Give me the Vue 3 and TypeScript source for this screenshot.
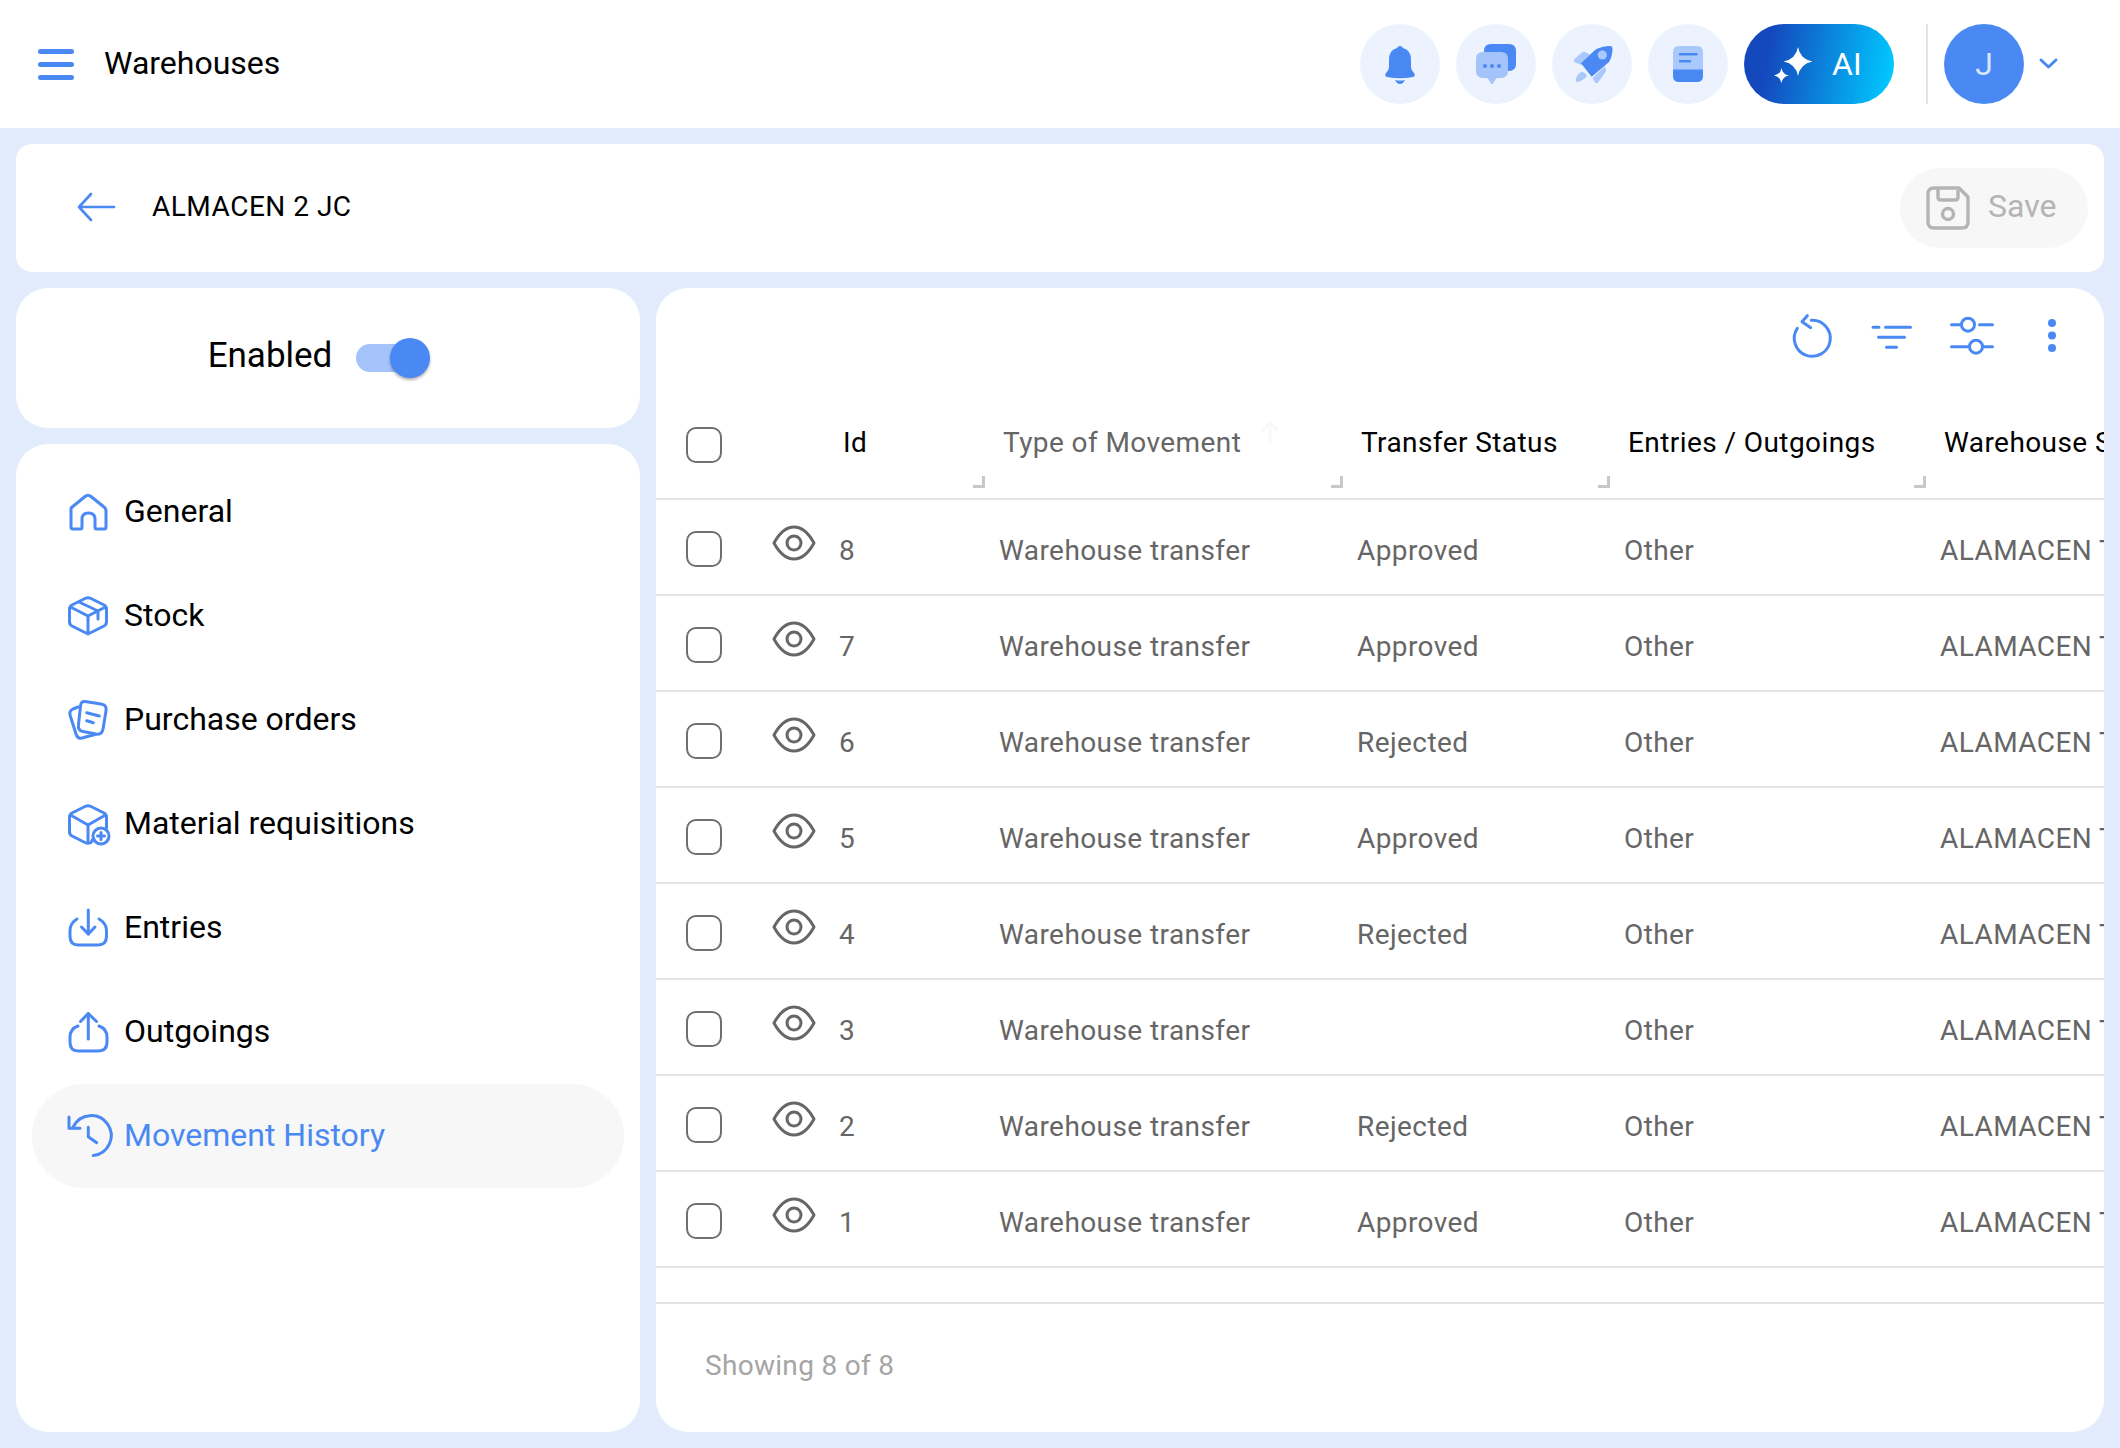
<script setup lang="ts">
interface MenuItem {
  label: string
  paths: string[]
  active?: boolean
}

interface Movement {
  id: number
  status: string
}

const menu: MenuItem[] = [
  {
    label: 'General',
    paths: ['M3 16 L17 4.5 Q20 2 23 4.5 L36 15 Q38 16.5 38 19 V35 Q38 37 36 37 H28.5 Q27 37 27 35 V27 Q27 21 20.5 21 Q14 21 14 27 V35 Q14 37 12.5 37 H5 Q3 37 3 35 V19 Q3 17 3 16 Z']
  },
  {
    label: 'Stock',
    paths: [
      'M17 2.5 Q20 1 23 2.5 L36 9 Q38.5 10.5 38.5 13 V26 Q38.5 28.5 36 30 L23 36.5 Q20 38 17 36.5 L4 30 Q1.5 28.5 1.5 26 V13 Q1.5 10.5 4 9 Z',
      'M2.5 11 L20 20 L37.5 11',
      'M20 20 V38',
      'M11 6 L30 15 V23'
    ]
  },
  {
    label: 'Purchase orders',
    paths: [
      'M17 1.5 L33 4 Q39 5 38 11 L35 29 Q34 35 28 34 L15 31.5 Q9.5 30.5 10.5 24.5 L12.5 6 Q13 1 17 1.5 Z',
      'M10 7 L5 9 Q1 11 2 15 L8 34 Q9.5 39 14 38 L27 34.5',
      'M18.7 12.7 L31.3 16',
      'M18.7 20.7 L25.3 22.7'
    ]
  },
  {
    label: 'Material requisitions',
    paths: [
      'M25 35 L23 38.5 Q20 40 17 38.5 L4 32 Q1.5 30.5 1.5 28 V13 Q1.5 10.5 4 9 L17 2.5 Q20 1 23 2.5 L36 9 Q38.5 10.5 38.5 13 V24',
      'M2.5 11 L20 21 L37.5 11',
      'M20 21 V38',
      'M41 32 A8 8 0 1 1 25 32 A8 8 0 1 1 41 32 Z',
      'M29.5 32 H36.5',
      'M33 28.5 V35.5'
    ]
  },
  {
    label: 'Entries',
    paths: [
      'M9 11 Q2 15 2 23 V28 Q2 37 10 37 H30 Q38.5 37 38.5 28 V23 Q38.5 15 31 11',
      'M20.3 2 V26',
      'M13.5 19 L20.3 26 L27 19'
    ]
  },
  {
    label: 'Outgoings',
    paths: [
      'M10 14 Q2 17 2 25 V30 Q2 39 10 39 H30 Q39 39 39 30 V25 Q39 17 31 14',
      'M20.3 1.5 V27',
      'M12.5 9.5 L20.3 1.5 L28.5 9.5'
    ]
  },
  {
    label: 'Movement History',
    active: true,
    paths: [
      'M5.3 10.7 A20 20 0 1 1 25.3 39.5',
      'M1 1 V12.3 H12',
      'M20.3 11.3 V20.7 L28.7 26.7'
    ]
  }
]

const movements: Movement[] = [
  { id: 8, status: 'Approved' },
  { id: 7, status: 'Approved' },
  { id: 6, status: 'Rejected' },
  { id: 5, status: 'Approved' },
  { id: 4, status: 'Rejected' },
  { id: 3, status: '' },
  { id: 2, status: 'Rejected' },
  { id: 1, status: 'Approved' }
]
</script>

<template>
  <div class="page">
    <header class="topbar">
      <button class="burger" aria-label="Menu">
        <span></span><span></span><span></span>
      </button>
      <h1 class="page-title">Warehouses</h1>

      <div class="top-actions">
        <button class="round-btn" aria-label="Notifications">
          <svg viewBox="0 0 48 48" width="48" height="48">
            <path fill="#4a89f3" d="M24 6 Q26 6 27 8 Q35 10 35 20 V27 Q35 30 38 33 Q40 36 37 37 Q24 39.5 11 37 Q8 36 10 33 Q13 30 13 27 V20 Q13 10 21 8 Q22 6 24 6 Z" />
            <path fill="#4a89f3" d="M19 40 Q24 41 29 40 Q27 44 24 44 Q21 44 19 40 Z" />
          </svg>
        </button>
        <button class="round-btn" aria-label="Messages">
          <svg viewBox="0 0 48 48" width="48" height="48">
            <path fill="#4a89f3" d="M19 4 H37 Q44 4 44 11 V24 Q44 31 37 31 H20 Q12 31 12 24 V11 Q12 4 19 4 Z" />
            <path fill="#a3c3fa" d="M11 12 H29 Q36 12 36 19 V31 Q36 38 29 38 H24.5 L21 43.5 Q20 44.5 19 43.5 L15.5 38 H11 Q4 38 4 31 V19 Q4 12 11 12 Z" />
            <circle cx="13" cy="26" r="2" fill="#4a89f3" />
            <circle cx="20" cy="26" r="2" fill="#4a89f3" />
            <circle cx="27" cy="26" r="2" fill="#4a89f3" />
          </svg>
        </button>
        <button class="round-btn" aria-label="Launch">
          <svg viewBox="0 0 48 48" width="48" height="48">
            <path fill="#a9c8fb" d="M6.5 19 L14 12.5 Q15.5 11.5 17 12 L22 14.5 L14 25 L7 22.5 Q5 21 6.5 19 Z" />
            <path fill="#a9c8fb" d="M37 26 L38 30 Q38.3 31.5 37 33 L30 42.5 Q28.5 44 27 42.5 L24.5 38 Z" />
            <path fill="#a9c8fb" d="M13.7 31.7 Q19 33 18.7 37 Q14 41 10 42 Q7 42.5 8 39 Q9 34 13.7 31.7 Z" />
            <path fill="#4a89f3" d="M13 23.3 L27 10 Q34 6 42 6 Q44.5 6 44.5 8.5 Q44.5 16 41 22 L23.7 36.7 Z" />
            <circle cx="34.3" cy="15" r="4.6" fill="#a9c8fb" />
          </svg>
        </button>
        <button class="round-btn" aria-label="Documentation">
          <svg viewBox="0 0 48 48" width="48" height="48">
            <path fill="#a9c8fb" d="M15 6 H33 Q39 6 39 12 V30 H9 V12 Q9 6 15 6 Z" />
            <path fill="#4a89f3" d="M9 29.5 H39 V36 Q39 42 33 42 H15 Q9 42 9 36 Z" />
            <path d="M16 14.3 H32.5 M16 21.3 H26" stroke="#4a89f3" stroke-width="2.4" stroke-linecap="round" />
          </svg>
        </button>
        <button class="ai-btn">
          <svg viewBox="0 0 44 44" width="44" height="44">
            <path fill="#fff" d="M27 5 Q29 17 41.5 19.5 Q29 22 27 34 Q25 22 12.5 19.5 Q25 17 27 5 Z" />
            <path fill="#fff" d="M10.5 26 Q11.5 32.5 18 33.5 Q11.5 34.5 10.5 41 Q9.5 34.5 3 33.5 Q9.5 32.5 10.5 26 Z" />
          </svg>
          <span>AI</span>
        </button>
      </div>

      <div class="top-divider"></div>
      <div class="avatar">J</div>
      <svg class="chevron" viewBox="0 0 24 24" width="24" height="24" fill="none" stroke="#4a89f3" stroke-width="3" stroke-linecap="round" stroke-linejoin="round">
        <path d="M5 8 L12.5 15 L20 8" />
      </svg>
    </header>

    <main class="content">
      <section class="title-card">
        <button class="back-btn" aria-label="Back">
          <svg viewBox="0 0 40 32" width="40" height="32" fill="none" stroke="#4a89f3" stroke-width="2.6" stroke-linecap="round" stroke-linejoin="round">
            <path d="M2 16 H37 M14 3 L2 16 L14 29" />
          </svg>
        </button>
        <span class="record-name">ALMACEN 2 JC</span>
        <button class="save-btn" disabled>
          <svg viewBox="0 0 48 48" width="48" height="48" fill="none" stroke="#b4b4b4" stroke-width="3.4" stroke-linejoin="round">
            <path d="M10 4 H35 L44 13 V38 Q44 44 38 44 H10 Q4 44 4 38 V10 Q4 4 10 4 Z" />
            <path d="M14 4 V13 Q14 16 17 16 H31 Q34 16 34 13 V6" />
            <circle cx="24" cy="30" r="5.5" />
          </svg>
          <span class="save-label">Save</span>
        </button>
      </section>

      <div class="columns">
        <aside class="side">
          <div class="enabled-card">
            <span class="enabled-label">Enabled</span>
            <span class="switch"><span class="thumb"></span></span>
          </div>
          <nav class="menu-card">
            <a v-for="item in menu" :key="item.label" class="menu-item" :class="{ active: item.active }">
              <svg viewBox="0 0 40 40" width="40" height="40" fill="none" stroke="#4a89f3" stroke-width="3" stroke-linecap="round" stroke-linejoin="round">
                <path v-for="d in item.paths" :key="d" :d="d" />
              </svg>
              <span class="menu-label">{{ item.label }}</span>
            </a>
          </nav>
        </aside>

        <section class="panel">
          <div class="toolbar">
            <button class="tool" aria-label="Refresh">
              <svg viewBox="0 0 48 48" width="48" height="48" fill="none" stroke="#4a89f3" stroke-width="3" stroke-linecap="round" stroke-linejoin="round">
                <path d="M9.3 16.3 A18 18 0 1 0 23.3 8.3" />
                <path d="M19.3 3.7 L14 9.7 L22.7 15.7" />
              </svg>
            </button>
            <button class="tool" aria-label="Filter">
              <svg viewBox="0 0 48 48" width="48" height="48" fill="none" stroke="#4a89f3" stroke-width="3" stroke-linecap="round">
                <path d="M5 15.3 H11 M17.5 15.3 H42.5 M10.5 25.3 H36.5 M18.5 35.3 H28.5" />
              </svg>
            </button>
            <button class="tool" aria-label="Columns">
              <svg viewBox="0 0 48 48" width="48" height="48" fill="none" stroke="#4a89f3" stroke-width="3" stroke-linecap="round">
                <circle cx="20" cy="12.7" r="6.5" />
                <circle cx="28" cy="34.7" r="6.5" />
                <path d="M3.5 12.7 H12.5 M31.5 12.7 H44.5 M3.5 34.7 H20.5 M35.5 34.7 H44.5" />
              </svg>
            </button>
            <button class="tool" aria-label="More">
              <svg viewBox="0 0 48 48" width="48" height="48" fill="#4a89f3">
                <circle cx="24" cy="11" r="4" />
                <circle cx="24" cy="23.5" r="4" />
                <circle cx="24" cy="36" r="4" />
              </svg>
            </button>
          </div>

          <div class="table-wrap">
            <table class="grid">
              <colgroup>
                <col style="width: 116px" />
                <col style="width: 67px" />
                <col style="width: 160px" />
                <col style="width: 358px" />
                <col style="width: 267px" />
                <col style="width: 316px" />
                <col style="width: 300px" />
              </colgroup>
              <thead>
                <tr>
                  <th class="check-cell"><span class="checkbox"></span></th>
                  <th></th>
                  <th>Id<i class="resizer"></i></th>
                  <th class="sorted">
                    Type of Movement
                    <svg class="sort-arrow" viewBox="0 0 24 24" width="24" height="24" fill="none" stroke="#f8f8f8" stroke-width="3">
                      <path d="M12 22 V3 M4 11 L12 3 L20 11" />
                    </svg>
                    <i class="resizer"></i>
                  </th>
                  <th>Transfer Status<i class="resizer"></i></th>
                  <th>Entries / Outgoings<i class="resizer"></i></th>
                  <th>Warehouse Source</th>
                </tr>
              </thead>
              <tbody>
                <tr v-for="row in movements" :key="row.id">
                  <td class="check-cell"><span class="checkbox"></span></td>
                  <td>
                    <svg class="eye" viewBox="0 0 44 36" width="44" height="36" fill="none" stroke="#666" stroke-width="3" stroke-linejoin="round">
                      <path d="M2 18 C8 7 15 2 22 2 C29 2 36 7 42 18 C36 29 29 34 22 34 C15 34 8 29 2 18 Z" />
                      <circle cx="22" cy="18" r="7" />
                    </svg>
                  </td>
                  <td>{{ row.id }}</td>
                  <td>Warehouse transfer</td>
                  <td>{{ row.status }}</td>
                  <td>Other</td>
                  <td>ALAMACEN TRANSITO</td>
                </tr>
              </tbody>
            </table>
          </div>

          <footer class="panel-footer">Showing 8 of 8</footer>
        </section>
      </div>
    </main>
  </div>
</template>

<style>
html,
body {
  margin: 0;
  background: #e2ebfc;
}
</style>

<style scoped>
.page {
  width: 2120px;
  height: 1448px;
  display: flex;
  flex-direction: column;
  overflow: hidden;
  background: #e2ebfc;
  font-family: Roboto, "Liberation Sans", sans-serif;
  color: #000;
}

button {
  border: none;
  background: none;
  padding: 0;
  font-family: inherit;
  cursor: pointer;
}

.topbar {
  flex: 0 0 128px;
  display: flex;
  align-items: center;
  padding: 0 60px 0 38px;
  background: #fff;
}

.burger {
  width: 36px;
  display: flex;
  flex-direction: column;
  gap: 8px;
}

.burger span {
  height: 5px;
  border-radius: 3px;
  background: #4a89f3;
}

.page-title {
  margin: 0 0 2px 30px;
  font-size: 32px;
  font-weight: 400;
}

.top-actions {
  margin-left: auto;
  display: flex;
  gap: 16px;
}

.round-btn {
  width: 80px;
  height: 80px;
  border-radius: 50%;
  background: #ecf3fe;
  display: flex;
  align-items: center;
  justify-content: center;
}

.ai-btn {
  width: 150px;
  height: 80px;
  border-radius: 40px;
  padding-left: 27px;
  display: flex;
  align-items: center;
  gap: 17px;
  background: linear-gradient(100deg, #1449bd 18%, #00c8ff 96%);
  color: #fff;
  font-size: 32px;
}

.top-divider {
  width: 2px;
  height: 80px;
  margin-left: 32px;
  background: #e4e4e4;
}

.avatar {
  width: 80px;
  height: 80px;
  margin-left: 16px;
  border-radius: 50%;
  background: #4a89f3;
  color: #d6e4fc;
  font-size: 32px;
  display: flex;
  align-items: center;
  justify-content: center;
}

.chevron {
  margin-left: 12px;
}

.content {
  flex: 1;
  min-height: 0;
  display: flex;
  flex-direction: column;
  gap: 16px;
  padding: 16px;
}

.title-card {
  flex: 0 0 128px;
  display: flex;
  align-items: center;
  padding: 0 16px 0 61px;
  background: #fff;
  border-radius: 16px;
}

.back-btn {
  display: flex;
  margin: 0 35px 2px 0;
}

.record-name {
  padding-bottom: 4px;
  font-size: 28px;
  letter-spacing: 0.5px;
}

.save-btn {
  margin-left: auto;
  width: 188px;
  height: 80px;
  border-radius: 40px;
  padding-left: 24px;
  display: flex;
  align-items: center;
  gap: 16px;
  background: #f7f7f7;
  color: #b4b4b4;
  font-size: 32px;
}

.save-label {
  padding-bottom: 4px;
}

.columns {
  flex: 1;
  min-height: 0;
  display: grid;
  grid-template-columns: 624px 1448px;
  gap: 16px;
}

.side {
  display: flex;
  flex-direction: column;
  gap: 16px;
}

.enabled-card {
  flex: 0 0 140px;
  display: flex;
  align-items: center;
  justify-content: center;
  gap: 24px;
  padding-right: 24px;
  box-sizing: border-box;
  background: #fff;
  border-radius: 32px;
}

.enabled-label {
  padding-bottom: 6px;
  font-size: 35px;
}

.switch {
  position: relative;
  width: 68px;
  height: 28px;
  border-radius: 14px;
  background: #a3c3fa;
}

.thumb {
  position: absolute;
  top: -6px;
  right: -6px;
  width: 40px;
  height: 40px;
  border-radius: 50%;
  background: #4a89f3;
  box-shadow: 0 2px 3px rgba(0, 0, 0, 0.3);
}

.menu-card {
  flex: 1;
  padding: 16px;
  background: #fff;
  border-radius: 32px;
}

.menu-item {
  height: 104px;
  padding-left: 36px;
  display: flex;
  align-items: center;
  gap: 16px;
  border-radius: 52px;
  font-size: 32px;
}

.menu-item svg {
  flex: none;
  overflow: visible;
}

.menu-label {
  padding-bottom: 2px;
}

.menu-item.active {
  background: #f7f7f7;
  color: #4a89f3;
}

.panel {
  display: flex;
  flex-direction: column;
  min-width: 0;
  overflow: hidden;
  background: #fff;
  border-radius: 32px;
}

.toolbar {
  flex: 0 0 100px;
  display: flex;
  justify-content: flex-end;
  align-items: flex-start;
  padding: 24px 12px 0 0;
  box-sizing: border-box;
}

.tool {
  width: 80px;
  height: 48px;
  display: flex;
  justify-content: center;
}

.table-wrap {
  flex: 1;
  min-height: 0;
  overflow: hidden;
}

.grid {
  width: 1584px;
  table-layout: fixed;
  border-collapse: separate;
  border-spacing: 0;
  font-size: 28px;
  letter-spacing: 0.42px;
  color: #666;
}

.grid th {
  position: relative;
  height: 112px;
  padding: 0 0 2px 4px;
  box-sizing: border-box;
  border-bottom: 2px solid #e4e4e4;
  text-align: left;
  font-weight: 400;
  color: #000;
  white-space: nowrap;
}

.grid th.sorted {
  color: #666;
}

.grid td {
  height: 96px;
  padding: 6px 0 0;
  box-sizing: border-box;
  border-bottom: 2px solid #e4e4e4;
  white-space: nowrap;
  overflow: hidden;
}

.grid .check-cell {
  padding: 4px 0 0 30px;
}

.checkbox {
  display: block;
  width: 36px;
  height: 36px;
  box-sizing: border-box;
  border: 2px solid #707070;
  border-radius: 10px;
}

.eye {
  display: block;
  margin: -15px 0 0 0;
}

.sort-arrow {
  position: absolute;
  top: 32px;
  left: 259px;
}

.resizer {
  position: absolute;
  right: 14px;
  bottom: 10px;
  width: 9px;
  height: 9px;
  border-right: 3px solid #c8c8c8;
  border-bottom: 3px solid #c8c8c8;
}

.panel-footer {
  flex: 0 0 130px;
  box-sizing: border-box;
  padding: 0 0 5px 49px;
  display: flex;
  align-items: center;
  border-top: 2px solid #e4e4e4;
  font-size: 28px;
  letter-spacing: 0.3px;
  color: #a5a5a5;
}
</style>
